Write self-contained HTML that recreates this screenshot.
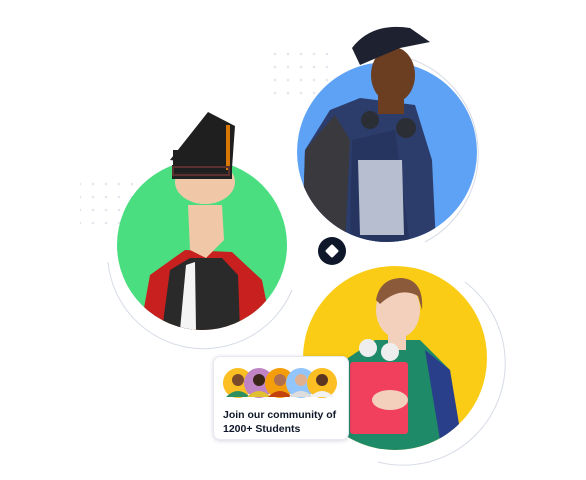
<!DOCTYPE html>
<html><head><meta charset="utf-8"><style>
html,body{margin:0;padding:0;background:#fff;width:586px;height:480px;overflow:hidden;font-family:"Liberation Sans",sans-serif}
.card{position:absolute;left:213px;top:356px;width:136px;height:84px;background:#fff;border-radius:7px;box-shadow:0 1px 4px rgba(30,40,80,.18);border:1px solid #e6e9f0;box-sizing:border-box}
.card p{margin:0;position:absolute;left:9px;top:51px;font-size:10.5px;line-height:14px;color:#0f172a;font-weight:bold}
</style></head><body>
<svg width="586" height="480" style="position:absolute;left:0;top:0">
<defs>
<pattern id="dots" width="13" height="13" patternUnits="userSpaceOnUse"><circle cx="2" cy="2" r="1.3" fill="#e2e6ee"/></pattern>
<clipPath id="cg"><circle cx="202" cy="245" r="85"/><rect x="100" y="100" width="200" height="145"/></clipPath>
<clipPath id="cb"><circle cx="387" cy="152" r="90"/><rect x="290" y="20" width="200" height="132"/></clipPath>
<clipPath id="cy"><circle cx="395" cy="358" r="92"/><rect x="300" y="260" width="190" height="98"/></clipPath>
</defs>
<rect x="268" y="52" width="60" height="50" fill="url(#dots)"/>
<rect x="80" y="172" width="60" height="60" fill="url(#dots)"/>
<path d="M108 262 A96 96 0 0 0 292 290" fill="none" stroke="#d6dbe6" stroke-width="1"/>
<path d="M400 56 A100 100 0 0 1 425 242" fill="none" stroke="#d6dbe6" stroke-width="1"/>
<path d="M465 282 A102 102 0 0 1 378 462" fill="none" stroke="#d6dbe6" stroke-width="1"/>
<circle cx="202" cy="245" r="85" fill="#4ade80"/>
<circle cx="387" cy="152" r="90" fill="#5ea2f6"/>
<circle cx="395" cy="358" r="92" fill="#facc15"/>
<g clip-path="url(#cg)">
<path d="M140 330 L150 275 L185 250 L232 252 L262 280 L272 330 Z" fill="#c8201e"/>
<path d="M162 330 L170 270 L190 258 L222 258 L238 275 L240 330 Z" fill="#2a2a2a"/>
<path d="M180 330 L186 265 L195 262 L196 330 Z" fill="#f4f4f4"/>
<path d="M188 205 L222 205 L224 240 L206 258 L190 250 Z" fill="#f0c8a8"/>
<ellipse cx="205" cy="182" rx="30" ry="22" fill="#f0c8a8"/>
<rect x="172" y="165" width="60" height="14" fill="#222"/>
<path d="M170 160 L208 112 L235 126 L232 168 Z" fill="#1f1f1f"/>
<rect x="173" y="150" width="58" height="22" fill="#1f1f1f"/>
<rect x="226" y="125" width="4" height="45" fill="#d97706"/>
<rect x="173" y="167" width="56" height="8" fill="none" stroke="#5a3030" stroke-width="2"/>
</g>
<g clip-path="url(#cb)">
<path d="M302 245 L305 150 L330 110 L360 98 L415 105 L432 160 L436 245 Z" fill="#2c3d6b"/>
<path d="M350 245 L352 140 L395 130 L410 245 Z" fill="#253560"/>
<path d="M358 160 L402 160 L404 235 L360 235 Z" fill="#e8ecf4" opacity=".75"/>
<path d="M302 245 L305 150 L335 115 L350 140 L345 245 Z" fill="#3a3a3e"/>
<ellipse cx="393" cy="75" rx="22" ry="28" fill="#6b3e22"/>
<rect x="378" y="90" width="26" height="24" fill="#6b3e22"/>
<circle cx="406" cy="128" r="10" fill="#2b2e35"/>
<circle cx="370" cy="120" r="9" fill="#2b2e35"/>
<path d="M352 48 Q372 22 410 28 L430 42 L400 48 L360 65 Z" fill="#1e2230"/>
</g>
<g clip-path="url(#cy)">
<path d="M340 460 L345 360 L375 340 L420 340 L450 370 L462 460 Z" fill="#1f8a67"/>
<path d="M425 350 L450 370 L460 430 L440 440 Z" fill="#2a3f8a"/>
<ellipse cx="398" cy="310" rx="22" ry="28" fill="#f2d0bc"/>
<path d="M376 300 Q380 278 402 278 Q424 280 422 310 L418 296 Q400 286 380 304 Z" fill="#8a5a3a"/>
<rect x="388" y="330" width="18" height="20" fill="#f2d0bc"/>
<circle cx="368" cy="348" r="9" fill="#eee"/><circle cx="390" cy="352" r="9" fill="#eee"/>
<rect x="350" y="362" width="58" height="72" rx="3" fill="#f0405e"/>
<ellipse cx="390" cy="400" rx="18" ry="10" fill="#f2d0bc"/>
</g>
<circle cx="332" cy="251" r="14" fill="#0f172a"/>
<rect x="327" y="246" width="10" height="10" rx="1.5" fill="#fff" transform="rotate(45 332 251)"/>
</svg>
<div class="card">
<svg width="136" height="44" style="position:absolute;left:0;top:0">
<circle cx="24" cy="26" r="15" fill="#fbbf24"/><circle cx="24" cy="23" r="6" fill="#7a4a2a"/><path d="M12 40 Q24 28 36 40" fill="#2f8f5f"/>
<circle cx="45" cy="26" r="15" fill="#c084c4"/><circle cx="45" cy="23" r="6" fill="#3b2418"/><path d="M33 40 Q45 28 57 40" fill="#e0c030"/>
<circle cx="66" cy="26" r="15" fill="#f59e0b"/><circle cx="66" cy="23" r="6" fill="#b07050"/><path d="M54 40 Q66 28 78 40" fill="#c2410c"/>
<circle cx="87" cy="26" r="15" fill="#93c5fd"/><circle cx="87" cy="23" r="6" fill="#e0b090"/><path d="M75 40 Q87 28 99 40" fill="#ddd"/>
<circle cx="108" cy="26" r="15" fill="#fbbf24"/><circle cx="108" cy="23" r="6" fill="#5a3520"/><path d="M96 40 Q108 28 120 40" fill="#f1f1f1"/>
</svg>
<p>Join our community of<br>1200+ Students</p>
</div>
</body></html>
